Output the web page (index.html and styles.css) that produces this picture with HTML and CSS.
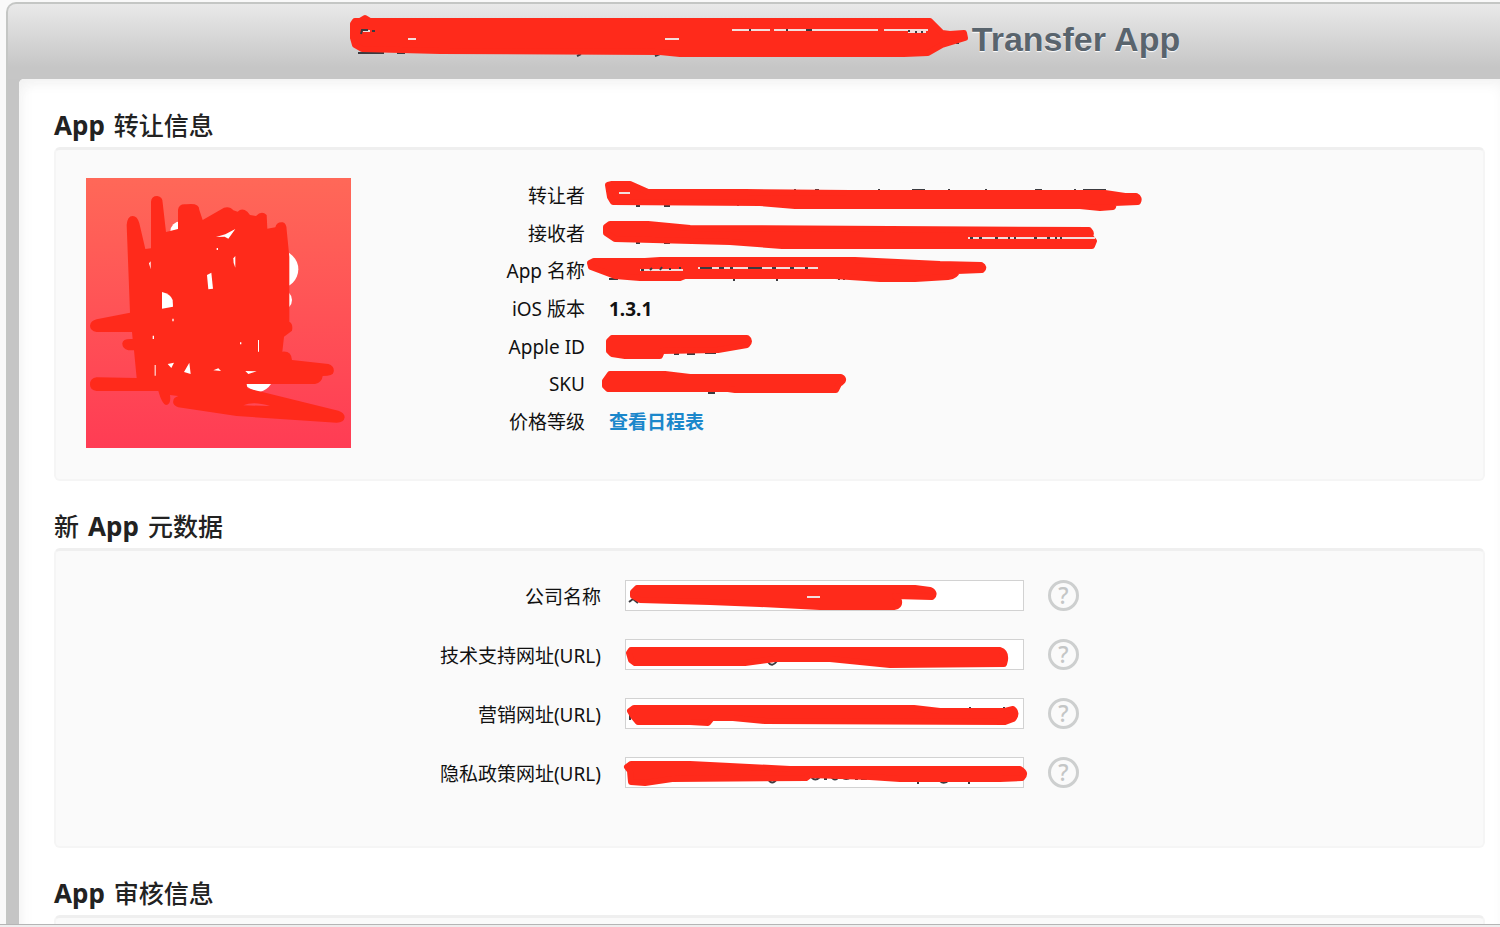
FILE: index.html
```html
<!DOCTYPE html>
<html lang="zh-CN">

<head>
    <meta charset="utf-8">
    <title>Transfer App</title>
    <link rel="stylesheet" href="styles.css">
</head>

<body>
    <div class="frame">
        <header class="page-header">
            <h1>
                <svg class="title-mark" viewBox="350 10 618 52" aria-hidden="true">
                    <path class="speck" d="M358 53 H384 M397 53 H405 M577 56 L581 54 M655 56 L660 54 M959 43 H956" />
                    <path class="ink" d="M353 24 L355 21 L360 21 L365 18 L370 21 L930 21 L942 33 L950 34 L964 33 L965 38 L942 45 L928 53 L904 54 L680 54 L660 52 L440 51 L362 49 L355 45 L353 38Z" />
                    <path class="gap" d="M363 31 H370 M408 39 H416 M665 39 H679 M732 30 H770 M774 30 H806 M812 30 H878 M884 30 H928 M908 32 H926" />
                    <path class="speck" d="M361 34 L362 30 L368 30 M372 31 H375 M749 30 H751 M786 30 H788 M806 30 H812 M908 31 H910 M915 32 H917 M921 32 H923" />
                </svg>
                <span>Transfer App</span>
            </h1>
        </header>

        <main class="content">
            <section>
                <h2><b>App</b> 转让信息</h2>
                <div class="panel app-info">
                    <svg class="app-icon" viewBox="48 54 795 810" role="img" aria-label="App">
                        <defs>
                            <linearGradient id="icon-bg" x1="0" y1="0" x2="0" y2="1">
                                <stop offset="0" stop-color="#ff6858" />
                                <stop offset="1" stop-color="#ff3c54" />
                            </linearGradient>
                        </defs>
                        <rect x="48" y="54" width="795" height="810" fill="url(#icon-bg)" />
                        <g fill="#fff">
                            <circle cx="332" cy="215" r="31" />
                            <circle cx="628" cy="328" r="57" />
                            <circle cx="635" cy="420" r="31" />
                            <path d="M520 670 H605 Q590 692 570 695 Q540 692 520 670Z" />
                        </g>
                        <path class="scribble" d="M170 195 Q172 168 188 168 Q202 168 208 190 L226 267 L243 265 V125 Q244 108 262 108 Q278 110 278 128 L288 216 L324 207 V150 Q326 130 350 133 Q388 128 388 150 L398 180 L462 143 Q480 138 490 151 L503 155 Q516 142 532 155 L540 165 L558 168 Q575 150 590 165 L592 206 L616 202 Q620 185 638 187 Q650 190 650 210 L658 290 V485 Q670 492 666 512 L642 530 L637 575 Q664 572 666 600 L775 612 Q794 618 791 635 Q790 648 758 648 Q756 668 735 672 H530 L532 685 L580 697 L805 752 Q824 758 824 772 Q822 788 800 788 L500 768 L325 742 Q306 735 310 722 Q310 713 325 708 L300 705 Q304 735 288 735 Q276 732 265 693 H80 Q60 690 60 674 Q60 654 80 652 L200 654 L192 571 H175 Q156 565 157 550 Q158 535 188 537 L186 516 H80 Q60 512 60 497 Q62 482 80 478 L180 458Z" />
                        <g fill="#fff">
                            <path d="M276 396 Q302 402 308 420 L309 440 L276 446Z" />
                            <path d="M411 345 L424 338 L429 386 L415 388Z" />
                            <path d="M438 231 L466 223 L496 207 L475 236 L464 230Z" />
                            <path d="M490 295 L496 288 V323 Q489 310 490 295Z" />
                            <path d="M237 310 L242 304 V328Z M293 612 L312 608 L304 624Z M342 636 L358 608 L362 642Z" />
                            <path d="M430 631 L445 625 L453 633Z M526 633 L560 634 L535 642Z M564 540 h3 v35 h-3Z M254 615 h3 v32 h-3Z M307 476 h4 v8 h-4Z M248 527 h4 v10 h-4Z M440 264 h4 v6 h-4Z M510 547 h4 v6 h-4Z" />
                        </g>
                        <path d="M520 736 Q550 722 600 738Z" fill="#ff4856" />
                    </svg>

                    <dl class="info-list">
                        <dt>转让者</dt>
                        <dd>
                            <svg class="mark" viewBox="585 177 560 38" aria-hidden="true">
                                <path class="speck" d="M636 205 H640 M664 205 H670 M737 204 H739 M794 189 H796 M815 189 H819 M878 189 H880 M912 189 H925 M948 189 H950 M985 189 H987 M1035 189 H1042 M1074 189 H1076 M1083 189 H1106" />
                                <path class="ink" d="M608 184 L612 183 L630 183 L648 191 L745 191 L850 192 L1105 192 L1125 195 L1136 195 Q1140 197 1138 201 L1114 202 L1113 206 L1100 207 L1080 205 L795 205 L760 202 L613 201 L610 196Z" />
                                <path class="gap" d="M619 192 H630" />
                            </svg>
                        </dd>
                        <dt>接收者</dt>
                        <dd>
                            <svg class="mark" viewBox="585 215 560 38" aria-hidden="true">
                                <path class="speck" d="M636 242 H640 M664 242 H670" />
                                <path class="ink" d="M606 226 L610 223 L648 223 L690 227 L1089 229 Q1092 232 1090 235 L1094 240 L1092 245 L782 245 L730 241 L615 238 L606 232Z" />
                                <path class="gap" d="M968 237 H1095" />
                                <path class="speck" d="M970 237 H973 M979 237 H982 M995 237 H998 M1008 237 H1010 M1014 237 H1016 M1034 237 H1037 M1047 237 H1050 M1055 237 H1057 M1060 237 H1062" />
                            </svg>
                        </dd>
                        <dt>App 名称</dt>
                        <dd>
                            <svg class="mark" viewBox="585 252 560 38" aria-hidden="true">
                                <path class="speck" d="M609 278 H618 M733 279 H735 M776 279 H778 M838 278 H840 M843 278 H845" />
                                <path class="ink" d="M590 262 L594 260 L645 260 L660 259 L855 259 L940 263 L981 264 Q985 266 982 269 L957 270 Q956 275 948 276 L915 278 L880 278 L835 275 L685 275 L680 277 L640 277 L615 275 L591 266Z" />
                                <path class="gap" d="M640 269 H683 M698 267 H818" />
                                <path class="speck" d="M641 269 H644 M650 269 L652 267 M660 269 L662 266 M670 269 V267 M680 268 V266 M700 267 H712 M719 267 H724 M730 267 H733 M748 267 H762 M772 267 H776 M790 267 H794 M805 267 H808" />
                            </svg>
                        </dd>
                        <dt>iOS 版本</dt>
                        <dd>1.3.1</dd>
                        <dt>Apple ID</dt>
                        <dd>
                            <svg class="mark" viewBox="585 328 560 38" aria-hidden="true">
                                <path class="speck" d="M674 353 H679 M687 353 H695 M705 352 H716" />
                                <path class="ink" d="M609 340 L612 337 L747 337 Q751 340 747 344 L718 349 L662 350 L660 355 L625 355 L612 353 L609 350Z" />
                            </svg>
                        </dd>
                        <dt>SKU</dt>
                        <dd>
                            <svg class="mark" viewBox="585 365 560 38" aria-hidden="true">
                                <path class="speck" d="M708 392 H715" />
                                <path class="ink" d="M605 380 L610 373 L665 373 L690 376 L841 376 Q846 379 839 383 L836 389 L735 389 L728 388 L608 388 L605 385Z" />
                            </svg>
                        </dd>
                        <dt>价格等级</dt>
                        <dd><a href="#">查看日程表</a></dd>
                    </dl>
                </div>
            </section>

            <section>
                <h2>新 <b>App</b> 元数据</h2>
                <form class="panel metadata">
                    <div class="field">
                        <label for="company-name">公司名称</label>
                        <div class="input-wrap">
                            <input type="text" id="company-name">
                            <svg class="field-mark" viewBox="625 580 400 31" aria-hidden="true">
                                <path class="speck" d="M629 602 L637 596 M633 599 L638 603" />
                                <path class="ink" d="M633 592 L637 588 L915 588 L930 590 Q936 593 932 597 L895 596 L899 601 Q900 606 894 607 L820 607 L760 604 L710 602 L640 600 L633 596Z" />
                                <path class="gap" d="M807 597 H820" />
                            </svg>
                        </div>
                        <button type="button" class="help" aria-label="公司名称帮助">?</button>
                    </div>
                    <div class="field">
                        <label for="support-url">技术支持网址(URL)</label>
                        <div class="input-wrap">
                            <input type="text" id="support-url">
                            <svg class="field-mark" viewBox="625 639 400 31" aria-hidden="true">
                                <path class="speck" d="M768 662 Q772 668 777 661" />
                                <path class="ink" d="M629 653 L631 650 L1000 650 Q1006 652 1005 660 L1004 664 L890 665 L860 662 L830 659 L775 659 L745 663 L635 663 L631 660Z" />
                            </svg>
                        </div>
                        <button type="button" class="help" aria-label="技术支持网址帮助">?</button>
                    </div>
                    <div class="field">
                        <label for="marketing-url">营销网址(URL)</label>
                        <div class="input-wrap">
                            <input type="text" id="marketing-url">
                            <svg class="field-mark" viewBox="625 698 400 31" aria-hidden="true">
                                <path class="speck" d="M630 714 V720 M715 720 H720 M970 707 V710 M1004 707 V710" />
                                <path class="ink" d="M630 711 L634 708 L914 708 L940 711 L1005 711 L1013 709 Q1018 713 1013 719 L1005 722 L765 721 L733 718 L712 718 L708 723 L690 722 L638 722 L633 716Z" />
                            </svg>
                        </div>
                        <button type="button" class="help" aria-label="营销网址帮助">?</button>
                    </div>
                    <div class="field">
                        <label for="privacy-url">隐私政策网址(URL)</label>
                        <div class="input-wrap">
                            <input type="text" id="privacy-url">
                            <svg class="field-mark" viewBox="625 757 400 31" aria-hidden="true">
                                <path class="speck" d="M768 779 Q772 786 777 779 M811 777 Q815 782 820 777 M824 779 H827 M831 777 Q835 782 839 777 M842 777 Q846 781 851 777 M855 779 H858 M861 779 H867 M918 784 V781 M940 781 Q944 785 949 780 M969 784 V781" />
                                <path class="ink" d="M627 767 L631 764 L690 764 L790 769 L1020 769 Q1027 773 1022 778 L1000 779 L900 779 L870 777 L810 775 L806 778 L672 779 L645 783 L631 782 L630 771Z" />
                            </svg>
                        </div>
                        <button type="button" class="help" aria-label="隐私政策网址帮助">?</button>
                    </div>
                </form>
            </section>

            <section>
                <h2><b>App</b> 审核信息</h2>
                <div class="panel review"></div>
            </section>
        </main>
    </div>
    <div class="bottom-edge"></div>
</body>

</html>
```
FILE: styles.css
```css
* {
    box-sizing: border-box;
    margin: 0;
    padding: 0;
}

body {
    display: flex;
    flex-direction: column;
    height: 100vh;
    overflow: hidden;
    background: #f9f9f9;
    color: #111;
    font-family: "Noto Sans", "Noto Sans CJK SC", sans-serif;
    font-size: 19px;
}

.frame {
    flex: 1;
    min-height: 0;
    overflow: hidden;
    margin: 2px 0 0 6px;
    padding-left: 11px;
    background: #c5c5c5;
    border: 2px solid #c4c6c4;
    border-width: 2px 0 0 2px;
    border-top-left-radius: 10px;
}

.bottom-edge {
    height: 3px;
    background: #eee;
    border-top: 1px solid #b5b5b5;
}

/* header */

.page-header {
    height: 75px;
    margin-left: -11px;
    padding-left: 22px;
    background: linear-gradient(#e9e9e9, #c6c6c6 85%);
}

h1 {
    display: flex;
    justify-content: center;
    gap: 4px;
    padding-top: 6px;
    color: #59646d;
    font-family: "Liberation Sans", Arial, sans-serif;
    font-size: 34px;
    line-height: 58px;
    text-shadow: 0 1px 1px #fff;
}

.title-mark {
    width: 618px;
    height: 52px;
    overflow: visible;
}

/* content */

.content {
    padding: 28px 15px 28px 35px;
    background: #fff;
    border-top-left-radius: 5px;
    box-shadow: inset 0 8px 14px -4px #f1f1f1, inset 8px 0 16px -6px #f4f4f4;
}

section {
    margin-bottom: 27px;
}

h2 {
    display: flex;
    gap: 9px;
    margin-bottom: 4px;
    color: #222;
    font-size: 25px;
    font-weight: 500;
    line-height: 36px;
}

h2 b {
    font-size: 26px;
}

.panel {
    background: #fafafa;
    border: 2px solid #f5f5f5;
    border-top: 3px solid #efefef;
    border-radius: 6px;
}

.app-info {
    display: flex;
    padding: 28px 30px 31px;
}

.app-icon {
    width: 265px;
    height: 270px;
}

.info-list {
    flex: 1;
    display: grid;
    grid-template-columns: 234px 1fr;
    grid-auto-rows: 1fr;
    align-items: center;
    column-gap: 24px;
    height: 263px;
    line-height: 37px;
}

dt {
    text-align: right;
}

dd {
    position: relative;
    min-height: 37px;
    font-weight: bold;
}

a {
    color: #1b87cb;
    text-decoration: none;
}

.metadata {
    display: flex;
    flex-direction: column;
    gap: 28px;
    padding: 29px 30px 58px;
}

.field {
    display: flex;
    align-items: center;
    gap: 24px;
    height: 31px;
}

.field label {
    width: 515px;
    text-align: right;
}

.input-wrap {
    position: relative;
    width: 399px;
}

.input-wrap input {
    display: block;
    width: 100%;
    height: 31px;
    padding: 0 6px;
    background: #fff;
    border: 1px solid #d2d2d2;
    font: inherit;
}

.help {
    width: 31px;
    height: 31px;
    background: transparent;
    border: 3px solid #cdcfcf;
    border-radius: 50%;
    color: #c4c6c6;
    font-family: "Noto Sans", sans-serif;
    font-size: 23px;
    font-weight: 500;
    line-height: 25px;
}

.review {
    height: 300px;
}

/* marker strokes over private values */

.mark,
.field-mark {
    position: absolute;
    top: 0;
    overflow: visible;
    pointer-events: none;
}

.mark {
    left: -24px;
    width: 560px;
    height: 38px;
}

.field-mark {
    left: 0;
    width: 400px;
    height: 31px;
}

.ink {
    fill: #ff2a1b;
    stroke: #ff2a1b;
    stroke-width: 6;
    stroke-linejoin: round;
}

.scribble {
    fill: #ff2a1b;
}

.speck {
    fill: none;
    stroke: #3b3b40;
    stroke-width: 2;
}

.gap {
    fill: none;
    stroke: #f3dedc;
    stroke-width: 2;
}
```
